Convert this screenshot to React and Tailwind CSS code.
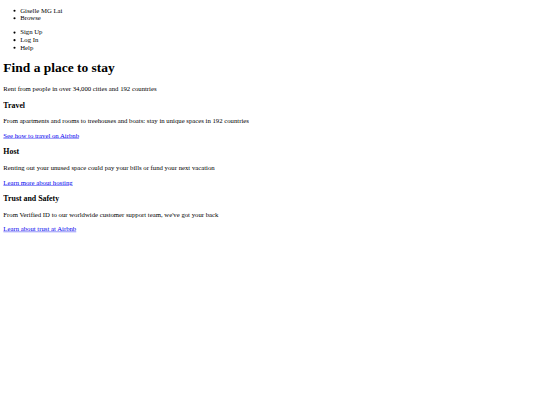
export default function App() {
  return (
    <div className="w-[540px] h-[405px] overflow-hidden bg-white">
      <div className="flow-root w-[1284px] origin-top-left scale-[0.4205]">
        <div className="m-2 font-['Liberation_Serif',serif] text-[16px] leading-[normal] text-black">
          <ul className="list-disc pl-10 my-4">
            <li>Giselle MG Lai</li>
            <li>Browse</li>
          </ul>
          <ul className="list-disc pl-10 my-4">
            <li>Sign Up</li>
            <li>Log In</li>
            <li>Help</li>
          </ul>
          <h1 className="text-[32px] font-bold my-[21.44px]">Find a place to stay</h1>
          <p className="my-4">Rent from people in over 34,000 cities and 192 countries</p>
          <h3 className="text-[18.72px] font-bold my-[18.72px]">Travel</h3>
          <p className="my-4">From apartments and rooms to treehouses and boats: stay in unique spaces in 192 countries</p>
          <p className="my-4">
            <a href="#" className="text-[#0000ee] underline">See how to travel on Airbnb</a>
          </p>
          <h3 className="text-[18.72px] font-bold my-[18.72px]">Host</h3>
          <p className="my-4">Renting out your unused space could pay your bills or fund your next vacation</p>
          <p className="my-4">
            <a href="#" className="text-[#0000ee] underline">Learn more about hosting</a>
          </p>
          <h3 className="text-[18.72px] font-bold my-[18.72px]">Trust and Safety</h3>
          <p className="my-4">From Verified ID to our worldwide customer support team, we've got your back</p>
          <p className="my-4">
            <a href="#" className="text-[#0000ee] underline">Learn about trust at Airbnb</a>
          </p>
        </div>
      </div>
    </div>
  );
}
